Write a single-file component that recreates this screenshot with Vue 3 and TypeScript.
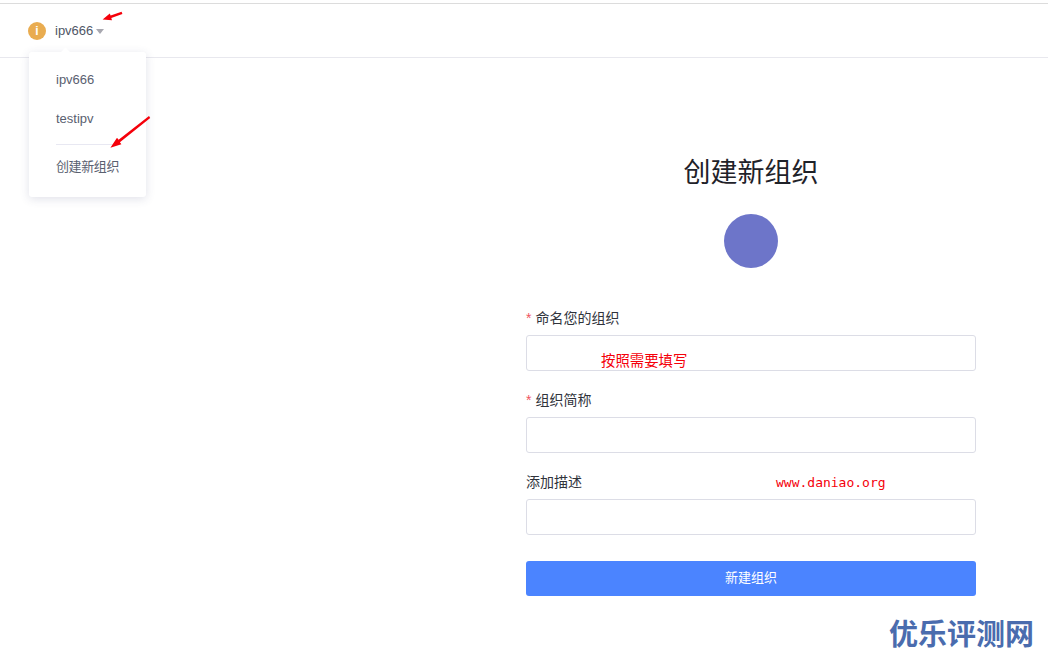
<script setup lang="ts">
const orgs: string[] = ['ipv666', 'testipv']
const fields = [
  { label: '命名您的组织', required: true },
  { label: '组织简称', required: true },
  { label: '添加描述', required: false },
]
</script>

<template>
  <div class="page">
    <header class="topbar">
      <span class="badge">i</span>
      <span class="org">ipv666</span>
      <span class="caret"></span>
      <div class="menu">
        <span class="notch"></span>
        <div v-for="o in orgs" :key="o" class="item">{{ o }}</div>
        <div class="divider"></div>
        <div class="item create">创建新组织</div>
      </div>
    </header>
    <main class="main">
      <form class="form" @submit.prevent>
        <h1 class="title">创建新组织</h1>
        <div class="avatar"></div>
        <div v-for="f in fields" :key="f.label" class="field">
          <label class="label"><span v-if="f.required" class="star">*</span>{{ f.label }}</label>
          <input class="input" type="text" />
        </div>
        <button class="submit" type="submit">新建组织</button>
      </form>
    </main>

    <svg class="arrows" width="1048" height="663" viewBox="0 0 1048 663">
      <g fill="#f5000a" stroke="none">
        <path d="M121.6 11.8 L110.6 15.4 L109.8 13.4 L102.6 19.4 L112 20.2 L111.3 18 L122.4 14 Z" />
        <path d="M149 116 L118.6 139.8 L117 137.8 L110.4 147.8 L121.4 144.2 L119.9 142.2 L150.2 118 Z" />
      </g>
    </svg>
    <span class="note note-fill">按照需要填写</span>
    <span class="note note-url">www.daniao.org</span>
    <span class="mark">优乐评测网</span>
  </div>
</template>

<style>
html, body { margin: 0; background: #fff; }
</style>

<style scoped>
.page {
  position: relative;
  width: 1048px;
  height: 663px;
  overflow: hidden;
  background: #fff;
  font-family: "Liberation Sans", "Noto Sans CJK SC", sans-serif;
  box-sizing: border-box;
  padding-top: 4px;
}
.page::before {
  content: "";
  position: absolute;
  left: 0; right: 0; top: 3px;
  height: 1px;
  background: #dcdcdc;
}
.topbar {
  position: relative;
  height: 54px;
  border-bottom: 1px solid #e8e8ee;
  display: flex;
  align-items: center;
  padding-left: 28px;
  box-sizing: border-box;
}
.badge {
  width: 18px; height: 18px;
  border-radius: 50%;
  background: #e9ac50;
  color: #fff;
  font-size: 12px;
  font-weight: 700;
  line-height: 18px;
  text-align: center;
}
.org {
  margin-left: 9px;
  font-size: 13px;
  color: #4f5666;
}
.caret {
  margin-left: 3px;
  margin-top: 2px;
  width: 0; height: 0;
  border-left: 4px solid transparent;
  border-right: 4px solid transparent;
  border-top: 5px solid #a8a8b0;
}
.menu {
  position: absolute;
  left: 29px;
  top: 48px;
  width: 117px;
  height: 145px;
  box-sizing: border-box;
  padding: 8px 27px 0;
  background: #fff;
  border-radius: 3px;
  box-shadow: 0 2px 10px rgba(60, 70, 120, 0.16);
  z-index: 2;
}
.notch {
  position: absolute;
  left: 33px; top: -3px;
  width: 7px; height: 7px;
  background: #fff;
  transform: rotate(45deg);
}
.item {
  height: 39px;
  line-height: 39px;
  font-size: 13px;
  color: #5a6070;
  white-space: nowrap;
}
.divider {
  height: 1px;
  background: #e8e8f2;
  margin-top: 6px;
}
.create {
  margin-top: 2px;
  letter-spacing: -0.4px;
}
.main {
  display: flex;
  justify-content: flex-end;
  padding-right: 72px;
}
.form {
  width: 450px;
  display: flex;
  flex-direction: column;
}
.title {
  margin: 96px 0 0;
  font-size: 27px;
  line-height: 38px;
  font-weight: 400;
  text-align: center;
  color: #1f2229;
}
.avatar {
  width: 54px; height: 54px;
  border-radius: 50%;
  background: #6d75c9;
  align-self: center;
  margin: 22px 0 37px;
}
.field { margin-bottom: 16px; }
.label {
  display: block;
  height: 26px;
  line-height: 26px;
  font-size: 14px;
  color: #30333b;
  margin-bottom: 4px;
}
.star {
  color: #f0555f;
  margin-right: 4px;
}
.input {
  display: block;
  width: 100%;
  height: 36px;
  box-sizing: border-box;
  border: 1px solid #dcdde6;
  border-radius: 3px;
  background: #fff;
  outline: none;
}
.submit {
  height: 35px;
  margin-top: 10px;
  padding: 0 0 5px;
  border: none;
  border-radius: 3px;
  background: #4b84ff;
  color: #fff;
  font-family: inherit;
  font-size: 13px;
}
.arrows {
  position: absolute;
  left: 0; top: 0;
  pointer-events: none;
  z-index: 3;
}
.note {
  position: absolute;
  color: #f5000a;
  font-size: 14.4px;
  line-height: 18px;
  white-space: nowrap;
}
.note-fill { left: 601px; top: 352px; }
.note-url {
  left: 776px; top: 474px;
  font-family: "DejaVu Sans Mono", "Liberation Mono", monospace;
  font-size: 13px;
}
.mark {
  position: absolute;
  left: 889px; top: 617px;
  font-size: 29px;
  line-height: 36px;
  font-weight: 700;
  color: #4a6cae;
  white-space: nowrap;
}
</style>
